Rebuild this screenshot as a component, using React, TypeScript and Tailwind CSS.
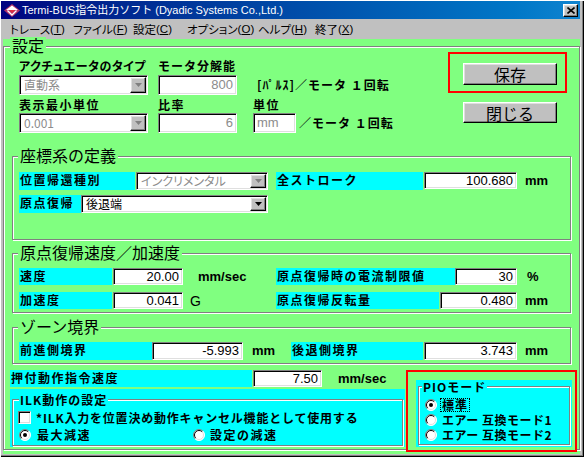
import React from "react";

const JP = "font-['Noto_Sans_CJK_JP','Noto_Sans_CJK_SC',sans-serif]";
const NUM = "font-['Liberation_Sans','Noto_Sans_CJK_JP',sans-serif]";
const LAT = "font-['Liberation_Sans','Noto_Sans_CJK_JP',sans-serif]";

const sunken =
  "border border-t-[#808080] border-l-[#808080] border-b-white border-r-white shadow-[inset_1px_1px_0_#000,inset_-1px_-1px_0_#dfdfdf]";
const raised =
  "border border-t-white border-l-white border-b-black border-r-black shadow-[inset_-1px_-1px_0_#808080,inset_1px_1px_0_#dfdfdf]";

function Field({
  className,
  value,
  disabled,
  left,
}: {
  className: string;
  value: string;
  disabled?: boolean;
  left?: boolean;
}) {
  return (
    <div
      className={`${sunken} bg-white flex items-center shrink-0 ${
        left ? "justify-start pl-[3px]" : "justify-end pr-[3px]"
      } ${NUM} text-[13px] leading-[14px] ${disabled ? "text-[#8c8c8c]" : "text-black"} ${className}`}
    >
      {value}
    </div>
  );
}

function Combo({ className, value, disabled }: { className: string; value: string; disabled?: boolean }) {
  return (
    <div className={`${sunken} bg-white flex items-stretch p-[1px] shrink-0 ${className}`}>
      <div
        className={`flex-1 flex items-center pl-[3px] text-[12px] leading-[14px] whitespace-nowrap [font-feature-settings:'palt'] ${JP} ${
          disabled ? "text-[#8c8c8c]" : "text-black"
        }`}
      >
        {value}
      </div>
      <div className={`${raised} w-[16px] bg-[#c0c0c0] flex items-center justify-center shrink-0`}>
        <svg width="7" height="4" viewBox="0 0 7 4">
          <path d="M0 0h7L3.5 4z" fill={disabled ? "#808080" : "#000"} />
        </svg>
      </div>
    </div>
  );
}

function Band({ className, children }: { className: string; children: React.ReactNode }) {
  return (
    <div
      className={`bg-[#00ffff] h-full shrink-0 ${JP} font-bold text-[12px] leading-[14px] pt-[1px] pl-[1px] tracking-[1.5px] text-black whitespace-nowrap ${className}`}
    >
      {children}
    </div>
  );
}

function Unit({ className, children }: { className: string; children: React.ReactNode }) {
  return (
    <span className={`${LAT} font-bold text-[13px] leading-[14px] text-black whitespace-nowrap ${className}`}>
      {children}
    </span>
  );
}

function Group({
  label,
  className,
  labelClass,
  children,
}: {
  label: string;
  className: string;
  labelClass: string;
  children?: React.ReactNode;
}) {
  return (
    <div className={`relative border border-[#808080] shadow-[1px_1px_0_#fff,inset_1px_1px_0_#fff] ${className}`}>
      <span className={`absolute whitespace-nowrap ${labelClass}`}>{label}</span>
      {children}
    </div>
  );
}

function Radio({ checked }: { checked?: boolean }) {
  return (
    <svg width="12" height="12" viewBox="0 0 12 12" className="shrink-0">
      <circle cx="6" cy="6" r="5.5" fill="#fff" />
      <path d="M2.1 9.9 A5.5 5.5 0 0 1 9.9 2.1" stroke="#808080" fill="none" />
      <path d="M9.9 2.1 A5.5 5.5 0 0 1 2.1 9.9" stroke="#fff" fill="none" />
      <path d="M2.8 9.2 A4.5 4.5 0 0 1 9.2 2.8" stroke="#000" fill="none" />
      <path d="M9.2 2.8 A4.5 4.5 0 0 1 2.8 9.2" stroke="#dfdfdf" fill="none" />
      {checked && <circle cx="6" cy="6" r="2" fill="#000" />}
    </svg>
  );
}

function Button({ className, children }: { className: string; children: React.ReactNode }) {
  return (
    <div
      className={`${raised} bg-[#c0c0c0] flex items-center justify-center ${JP} text-[16px] leading-[18px] text-black ${className}`}
    >
      {children}
    </div>
  );
}

function MenuItem({ className, label, k }: { className: string; label: string; k: string }) {
  return (
    <div className={`flex whitespace-nowrap ${className}`}>
      <span className={`${JP} [font-feature-settings:'palt']`}>{label}</span>
      <span className={LAT}>(</span>
      <span className={`${LAT} underline`}>{k}</span>
      <span className={LAT}>)</span>
    </div>
  );
}

const bigLabel = `left-[5px] top-[-10px] px-[2px] bg-[#80ff80] text-[16px] leading-[16px] ${JP} text-black`;
const smallLabel = `px-[1px] bg-[#00ffff] text-[12px] leading-[12px] font-bold tracking-[1px] ${JP} text-black`;

export default function App() {
  return (
    <div
      className={`w-[584px] h-[457px] bg-[#c0c0c0] pt-[1px] pl-[1px] pr-[4px] pb-[3px] flex flex-col overflow-hidden shadow-[inset_1px_1px_0_#fff,inset_-1px_-1px_0_#000,inset_-2px_-2px_0_#808080] ${JP}`}
    >
      {/* Title bar */}
      <div className="h-[18px] w-[579px] shrink-0 bg-gradient-to-r from-[#000080] to-[#1084d0] flex items-center pl-[3px] pr-[2px]">
        <svg width="16" height="13" viewBox="0 0 16 13" className="shrink-0">
          <path d="M8 0 L16 6.5 L8 13 L0 6.5 Z" fill="#b0306a" />
          <path d="M8 1.5 L14 6 L2 6 Z" fill="#fff" />
          <path d="M3.5 6.5 L8 11 L12.5 6.5" stroke="#fff" strokeWidth="1.3" fill="none" />
          <path d="M5 6 L8 9 L11 6" fill="#e03040" />
        </svg>
        <span className={`ml-[2px] text-white text-[11px] leading-[13px] whitespace-nowrap ${LAT}`}>
          Termi-BUS指令出力ソフト (Dyadic Systems Co.,Ltd.)
        </span>
        <div className={`${raised} ml-auto w-[15px] h-[13px] bg-[#c0c0c0] flex items-center justify-center`}>
          <svg width="8" height="7" viewBox="0 0 8 7">
            <path d="M0.5 0.5 L7.5 6.5 M7.5 0.5 L0.5 6.5" stroke="#000" strokeWidth="1.6" />
          </svg>
        </div>
      </div>

      {/* Menu bar */}
      <div className="h-[20px] shrink-0 flex items-center pl-[9px] text-[11.5px] leading-[14px] text-black">
        <MenuItem className="w-[63px]" label="トレース" k="T" />
        <MenuItem className="w-[60px]" label="ファイル" k="F" />
        <MenuItem className="w-[54px]" label="設定" k="C" />
        <MenuItem className="w-[71px]" label="オプション" k="O" />
        <MenuItem className="w-[57px]" label="ヘルプ" k="H" />
        <MenuItem className="" label="終了" k="X" />
      </div>

      {/* Client */}
      <div className="ml-[2px] w-[577px] h-[415px] shrink-0 bg-[#80ff80] pt-[7px]">
        <Group
          label="設定"
          className="h-[404px] w-[577px]"
          labelClass={`left-[6px] top-[-10px] px-[2px] bg-[#80ff80] text-[16px] leading-[16px] ${JP} text-black`}
        >
          {/* Top section */}
          <div className="flex h-[101px]">
            <div className="pl-[15px] pt-[12px]">
              <div className={`flex h-[14px] ${JP} font-bold text-[12px] leading-[14px] text-black whitespace-nowrap`}>
                <div className="w-[139px] [font-feature-settings:'palt'] tracking-[0.5px]">アクチュエータのタイプ</div>
                <div className="tracking-[1px]">モータ分解能</div>
              </div>
              <div className="flex h-[20px] mt-[2px] items-center">
                <Combo className="w-[129px] h-[20px]" value="直動系" disabled />
                <Field className="w-[79px] h-[20px] ml-[10px]" value="800" disabled />
                <span className={`ml-[20px] ${JP} font-bold text-[12px] leading-[14px] tracking-[1px] whitespace-nowrap`}>
                  [ﾊﾟﾙｽ]／モータ １回転
                </span>
              </div>
              <div
                className={`flex h-[14px] mt-[3px] ${JP} font-bold text-[12px] leading-[14px] text-black whitespace-nowrap tracking-[1.5px]`}
              >
                <div className="w-[139px]">表示最小単位</div>
                <div className="w-[95px]">比率</div>
                <div>単位</div>
              </div>
              <div className="flex h-[20px] mt-[1px] items-center">
                <Combo className="w-[129px] h-[20px]" value="0.001" disabled />
                <Field className="w-[79px] h-[20px] ml-[10px]" value="6" disabled />
                <Field className="w-[43px] h-[20px] ml-[16px]" value="mm" disabled left />
                <span className={`ml-[3px] ${JP} font-bold text-[12px] leading-[14px] tracking-[1px] whitespace-nowrap`}>
                  ／モータ １回転
                </span>
              </div>
            </div>
            <div className="ml-auto mr-[12px] pt-[5px] flex flex-col">
              <div className="w-[119px] h-[41px] border-2 border-[#ff0000] pl-[13px] pt-[9px]">
                <Button className="w-[94px] h-[22px]">保存</Button>
              </div>
              <Button className="w-[94px] h-[21px] mt-[9px] ml-[15px]">閉じる</Button>
            </div>
          </div>

          {/* 座標系の定義 */}
          <Group label="座標系の定義" className="mt-[8px] ml-[8px] w-[559px] h-[84px]" labelClass={bigLabel}>
            <div className="pt-[15px] pl-[6px]">
              <div className="flex h-[18px] items-center">
                <Band className="w-[116px]">位置帰還種別</Band>
                <Combo className="w-[132px] h-[18px] ml-[1px]" value="インクリメンタル" disabled />
                <Band className="w-[147px] ml-[8px]">全ストローク</Band>
                <Field className="w-[93px] h-[17px] ml-[1px] self-start" value="100.680" />
                <Unit className="ml-[8px]">mm</Unit>
              </div>
              <div className="flex h-[18px] mt-[5px] items-center">
                <Band className="w-[62px]">原点復帰</Band>
                <Combo className="w-[187px] h-[18px]" value="後退端" />
              </div>
            </div>
          </Group>

          {/* 原点復帰速度／加速度 */}
          <Group label="原点復帰速度／加速度" className="mt-[13px] ml-[8px] w-[559px] h-[60px]" labelClass={bigLabel}>
            <div className="pt-[14px] pl-[6px]">
              <div className="flex h-[17px] items-center">
                <div className="w-[257px] h-full flex items-center">
                  <Band className="w-[93px]">速度</Band>
                  <Field className="w-[70px] h-[17px] ml-[1px]" value="20.00" />
                  <Unit className="ml-[15px]">mm/sec</Unit>
                </div>
                <Band className="w-[179px]">原点復帰時の電流制限値</Band>
                <Field className="w-[62px] h-[17px]" value="30" />
                <Unit className="ml-[10px]">%</Unit>
              </div>
              <div className="flex h-[17px] mt-[7px] items-center">
                <div className="w-[257px] h-full flex items-center">
                  <Band className="w-[93px]">加速度</Band>
                  <Field className="w-[70px] h-[17px] ml-[1px]" value="0.041" />
                  <span className={`ml-[7px] ${LAT} text-[14px] leading-[14px] text-black`}>G</span>
                </div>
                <Band className="w-[163px]">原点復帰反転量</Band>
                <Field className="w-[77px] h-[17px] ml-[1px]" value="0.480" />
                <Unit className="ml-[8px]">mm</Unit>
              </div>
            </div>
          </Group>

          {/* ゾーン境界 */}
          <Group label="ゾーン境界" className="mt-[14px] ml-[8px] w-[559px] h-[37px]" labelClass={bigLabel}>
            <div className="pt-[14px] pl-[6px]">
              <div className="flex h-[18px] items-center">
                <div className="w-[272px] h-full flex items-center">
                  <Band className="w-[133px]">前進側境界</Band>
                  <Field className="w-[91px] h-[18px]" value="-5.993" />
                  <Unit className="ml-[9px]">mm</Unit>
                </div>
                <Band className="w-[132px]">後退側境界</Band>
                <Field className="w-[93px] h-[18px] ml-[1px]" value="3.743" />
                <Unit className="ml-[8px]">mm</Unit>
              </div>
            </div>
          </Group>

          {/* Bottom */}
          <div className="mt-[6px] pl-[6px] flex">
            <div className="w-[395px]">
              <div className="flex h-[17px] items-center">
                <Band className="w-[242px]">押付動作指令速度</Band>
                <Field className="w-[69px] h-[17px] ml-[1px]" value="7.50" />
                <Unit className="ml-[16px]">mm/sec</Unit>
              </div>
              <div className="mt-[2px] h-[58px] bg-[#00ffff] pt-[10px] px-[2px]">
                <Group label="ILK動作の設定" className="h-[47px]" labelClass={`left-[6px] top-[-6px] ${smallLabel}`}>
                  <div className="pt-[11px] pl-[5px]">
                    <div className="flex h-[13px] items-center">
                      <div className={`${sunken} bg-white w-[13px] h-[13px] shrink-0`} />
                      <span
                        className={`ml-[5px] ${JP} font-bold text-[12px] leading-[14px] tracking-[0.8px] whitespace-nowrap`}
                      >
                        *ILK入力を位置決め動作キャンセル機能として使用する
                      </span>
                    </div>
                    <div className="flex h-[12px] mt-[5px] items-center pl-[1px]">
                      <div className="w-[174px] flex items-center">
                        <Radio checked />
                        <span className={`ml-[6px] ${JP} font-bold text-[12px] leading-[14px] tracking-[1.5px]`}>
                          最大減速
                        </span>
                      </div>
                      <Radio />
                      <span className={`ml-[5px] ${JP} font-bold text-[12px] leading-[14px] tracking-[1.5px]`}>
                        設定の減速
                      </span>
                    </div>
                  </div>
                </Group>
              </div>
            </div>
            <div className="relative ml-[1px] w-[171px] h-[82px] shrink-0 border-2 border-[#ff0000] bg-[#80ff80] pt-[8px] pl-[8px]">
              <div className="w-[156px] h-[67px] bg-[#00ffff] pt-[6px] pl-[2px]">
                <Group label="PIOモード" className="w-[152px] h-[59px]" labelClass={`left-[3px] top-[-6px] ${smallLabel}`}>
                  <div
                    className={`pt-[10px] pl-[6px] ${JP} font-bold text-[12px] leading-[12px] tracking-[0.5px] whitespace-nowrap`}
                  >
                    <div className="flex h-[15px] items-center">
                      <Radio checked />
                      <span className="ml-[3px] border border-dotted border-black px-[1px] tracking-[1px]">標準</span>
                    </div>
                    <div className="flex h-[15px] items-center">
                      <Radio />
                      <span className="ml-[5px]">エアー 互換モード1</span>
                    </div>
                    <div className="flex h-[15px] items-center">
                      <Radio />
                      <span className="ml-[5px]">エアー 互換モード2</span>
                    </div>
                  </div>
                </Group>
              </div>
            </div>
          </div>
        </Group>
      </div>
    </div>
  );
}
